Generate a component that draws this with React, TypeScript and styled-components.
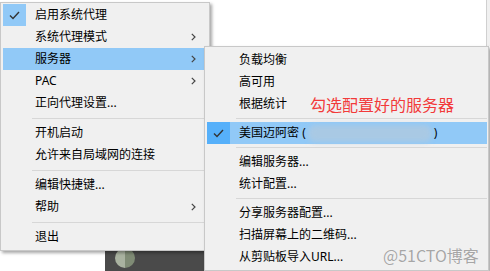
import styled, { createGlobalStyle } from 'styled-components';

const GlobalStyle = createGlobalStyle`
  html, body {
    margin: 0;
    padding: 0;
    background: #fff;
  }
  body {
    font-family: "Noto Sans", "Noto Sans CJK SC", sans-serif;
    font-size: 12px;
    color: #000;
  }
`;

type Entry =
  | { kind: 'item'; label: string; checked?: boolean; active?: boolean; arrow?: boolean }
  | { kind: 'sep' };

const mainItems: Entry[] = [
  { kind: 'item', label: '启用系统代理', checked: true },
  { kind: 'item', label: '系统代理模式', arrow: true },
  { kind: 'item', label: '服务器', arrow: true, active: true },
  { kind: 'item', label: 'PAC', arrow: true },
  { kind: 'item', label: '正向代理设置...' },
  { kind: 'sep' },
  { kind: 'item', label: '开机启动' },
  { kind: 'item', label: '允许来自局域网的连接' },
  { kind: 'sep' },
  { kind: 'item', label: '编辑快捷键...' },
  { kind: 'item', label: '帮助', arrow: true },
  { kind: 'sep' },
  { kind: 'item', label: '退出' },
];

const serverItems: Entry[] = [
  { kind: 'item', label: '负载均衡' },
  { kind: 'item', label: '高可用' },
  { kind: 'item', label: '根据统计' },
  { kind: 'sep' },
  { kind: 'item', label: '美国迈阿密', checked: true, active: true },
  { kind: 'sep' },
  { kind: 'item', label: '编辑服务器...' },
  { kind: 'item', label: '统计配置...' },
  { kind: 'sep' },
  { kind: 'item', label: '分享服务器配置...' },
  { kind: 'item', label: '扫描屏幕上的二维码...' },
  { kind: 'item', label: '从剪贴板导入URL...' },
];

const Check = () => (
  <svg width="11" height="9" viewBox="0 0 11 9">
    <polyline points="1,4.5 4,7.5 10,1" fill="none" stroke="#333" strokeWidth="1.4" />
  </svg>
);

const Chevron = () => (
  <svg width="5" height="8" viewBox="0 0 5 8">
    <polyline points="0.8,0.8 4,4 0.8,7.2" fill="none" stroke="#444" strokeWidth="1.2" />
  </svg>
);

function MenuList({ entries, server, sepHeight }: { entries: Entry[]; server?: boolean; sepHeight: number }) {
  return (
    <>
      {entries.map((e, i) =>
        e.kind === 'sep' ? (
          <Separator key={i} $h={sepHeight} />
        ) : (
          <Item key={i} $active={e.active}>
            <CheckCell $on={e.checked} $dark={e.checked && e.active}>
              {e.checked && <Check />}
            </CheckCell>
            <Label>
              {e.label}
              {server && e.checked && (
                <>
                  {' ('}
                  <Blurred />
                  {')'}
                </>
              )}
            </Label>
            {e.arrow && (
              <Arrow>
                <Chevron />
              </Arrow>
            )}
          </Item>
        )
      )}
    </>
  );
}

export default function App() {
  return (
    <Stage>
      <GlobalStyle />
      <EdgeBar />
      <Taskbar>
        <Avatar />
      </Taskbar>
      <MainMenu>
        <MenuList entries={mainItems} sepHeight={8} />
      </MainMenu>
      <SubMenu>
        <MenuList entries={serverItems} server sepHeight={7} />
      </SubMenu>
      <Note>勾选配置好的服务器</Note>
      <Watermark>@51CTO博客</Watermark>
    </Stage>
  );
}

const Stage = styled.div`
  position: relative;
  width: 490px;
  height: 271px;
  overflow: hidden;
  background: #fff;
`;

const Menu = styled.div`
  position: absolute;
  box-sizing: border-box;
  background: #f0f0f0;
  border: 1px solid #c8c8c8;
  box-shadow: 2px 2px 3px rgba(0, 0, 0, 0.35);
  display: flex;
  flex-direction: column;
`;

const MainMenu = styled(Menu)`
  left: 0;
  top: 2px;
  width: 210px;
  padding: 1px 4px 2px 2px;
`;

const SubMenu = styled(Menu)`
  left: 204px;
  top: 46px;
  width: 285px;
  padding: 2px 1px 2px 2px;
`;

const Item = styled.div<{ $active?: boolean }>`
  height: 22px;
  display: flex;
  align-items: center;
  background: ${(p) => (p.$active ? '#91c9f7' : 'transparent')};
  white-space: nowrap;
`;

const CheckCell = styled.div<{ $on?: boolean; $dark?: boolean }>`
  width: 23px;
  height: 22px;
  flex: none;
  display: flex;
  align-items: center;
  justify-content: center;
  background: ${(p) => (p.$dark ? '#56b0fa' : p.$on ? '#91c9f7' : 'transparent')};
`;

const Label = styled.span`
  flex: 1;
  padding-left: 9px;
  display: flex;
  align-items: center;
  line-height: 22px;
`;

const Arrow = styled.span`
  width: 14px;
  display: flex;
  align-items: center;
`;

const Separator = styled.div<{ $h: number }>`
  height: ${(p) => p.$h}px;
  margin-left: 29px;
  display: flex;
  align-items: center;
  &::after {
    content: '';
    flex: 1;
    height: 1px;
    background: #d7d7d7;
  }
`;

const Blurred = styled.span`
  display: inline-block;
  width: 124px;
  height: 17px;
  margin: 0 2px;
  border-radius: 7px;
  background: #a9c9e4;
  filter: blur(2.5px);
`;

const Note = styled.div`
  position: absolute;
  left: 310px;
  top: 94px;
  font-size: 16px;
  line-height: 20px;
  color: #f23a3a;
  font-family: "Noto Sans CJK SC", sans-serif;
`;

const Watermark = styled.div`
  position: absolute;
  left: 383px;
  top: 245px;
  font-size: 16px;
  line-height: 20px;
  color: #a6a6a6;
  font-family: "Noto Sans CJK SC", sans-serif;
  text-shadow: 0 0 1px #fff;
`;

const EdgeBar = styled.div`
  position: absolute;
  left: 486px;
  top: 0;
  width: 4px;
  height: 46px;
  background: #f0f0f0;
  border-left: 1px solid #d0d0d0;
`;

const Taskbar = styled.div`
  position: absolute;
  left: 105px;
  top: 248px;
  width: 100px;
  height: 23px;
  background: #4a4a4a;
`;

const Avatar = styled.div`
  position: absolute;
  left: 10px;
  top: 0;
  width: 20px;
  height: 20px;
  border-radius: 50%;
  background: linear-gradient(90deg, #a9b2a0 50%, #7f8b75 50%);
`;
